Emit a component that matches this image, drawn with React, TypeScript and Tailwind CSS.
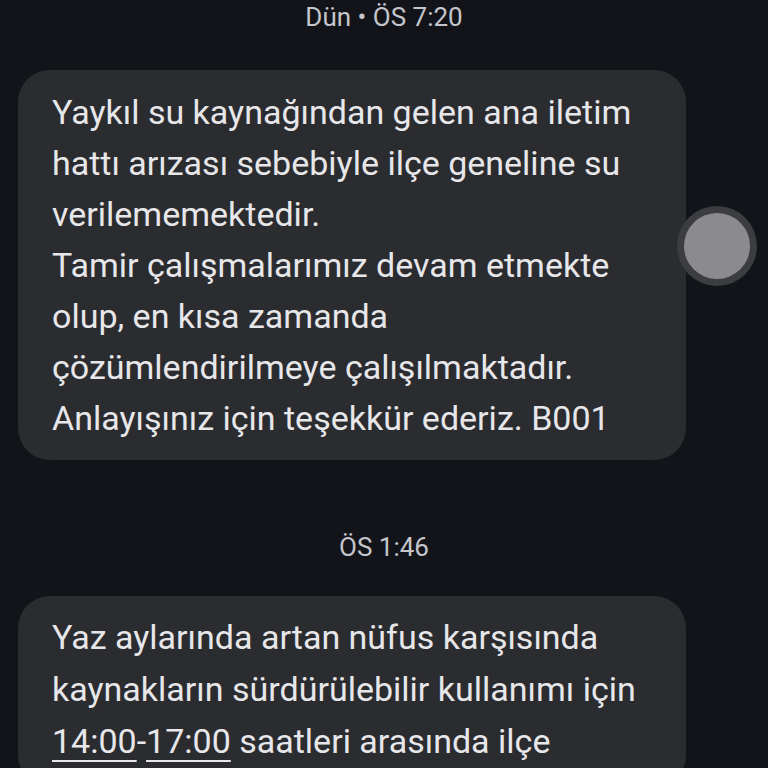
const lines1 = [
  "Yaykıl su kaynağından gelen ana iletim",
  "hattı arızası sebebiyle ilçe geneline su",
  "verilememektedir.",
  "Tamir çalışmalarımız devam etmekte",
  "olup, en kısa zamanda",
  "çözümlendirilmeye çalışılmaktadır.",
  "Anlayışınız için teşekkür ederiz. B001",
];

const Stamp = ({ text }: { text: string }) => (
  <div className="text-center text-[26px] leading-[34px] text-[#c5c6cb]">{text}</div>
);

export default function App() {
  return (
    <div
      className="relative h-[768px] w-[768px] overflow-hidden bg-[#131419]"
      style={{ fontFamily: "Roboto, 'Noto Sans', sans-serif" }}
    >
      <div className="flex flex-col">
        <Stamp text="Dün • ÖS 7:20" />

        <div className="mt-[36px] ml-[18px] w-[668px] rounded-[32px] bg-[#2b2c30] pl-[34px] pt-[17px] pb-[16px] text-[34px] leading-[51px] text-[#e7e7ea]">
          {lines1.map((l) => (
            <div key={l}>{l}</div>
          ))}
        </div>

        <div className="mt-[70px]">
          <Stamp text="ÖS 1:46" />
        </div>

        <div className="mt-[32px] ml-[18px] w-[668px] rounded-[32px] bg-[#2b2c30] pl-[34px] pt-[15px] pb-[20px] text-[34px] leading-[52px] text-[#e7e7ea]">
          <div>Yaz aylarında artan nüfus karşısında</div>
          <div>kaynakların sürdürülebilir kullanımı için</div>
          <div>
            <span className="underline decoration-2 underline-offset-[7px]">14:00</span>-
            <span className="underline decoration-2 underline-offset-[7px]">17:00</span> saatleri arasında ilçe
          </div>
        </div>
      </div>

      {/* scroll handle */}
      <div className="absolute left-[677px] top-[206px] flex h-[80px] w-[80px] items-center justify-center rounded-full bg-[#3c3d41]">
        <div className="h-[66px] w-[66px] rounded-full bg-[#8b8b8f]" />
      </div>
    </div>
  );
}
